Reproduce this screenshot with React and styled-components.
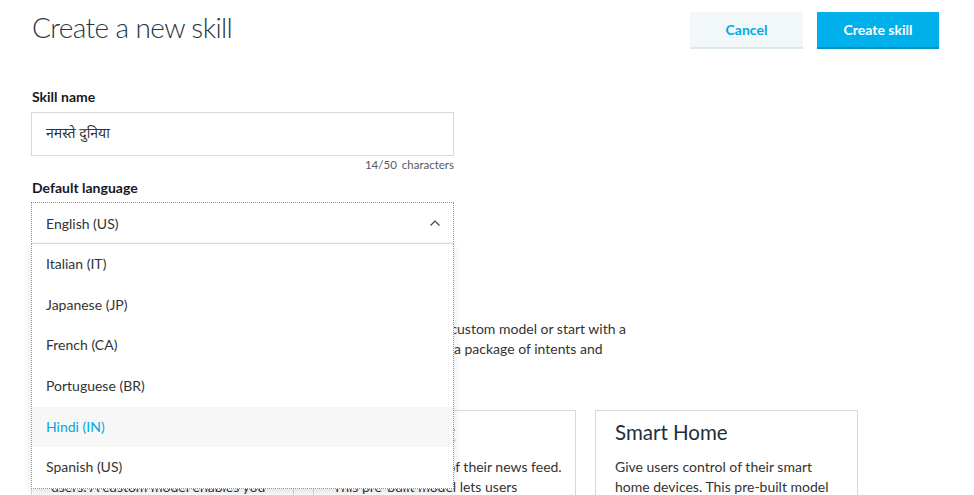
import React from "react";
import styled, { createGlobalStyle } from "styled-components";

const GlobalStyle = createGlobalStyle`
  html, body {
    margin: 0;
    padding: 0;
    background: #ffffff;
  }
  body {
    font-family: Lato, "Open Sans", "Noto Sans", sans-serif;
    color: #232f3e;
    overflow: hidden;
  }
`;

const Page = styled.div`
  width: 974px;
  height: 495px;
  box-sizing: border-box;
  padding: 12px 35px 0 31px;
  overflow: hidden;
`;

const Header = styled.div`
  display: flex;
  justify-content: space-between;
  align-items: flex-start;
`;

const Title = styled.h1`
  margin: -1px 0 0;
  padding-left: 1px;
  font-size: 28px;
  font-weight: 300;
  line-height: 33px;
  color: #2b3440;
  letter-spacing: -0.6px;
`;

const Actions = styled.div`
  display: flex;
  gap: 14px;
`;

const Button = styled.button`
  height: 37px;
  padding: 0;
  width: ${({ wide }) => (wide ? "122px" : "113px")};
  border: none;
  border-bottom: 2px solid ${({ primary }) => (primary ? "#0094c6" : "#dde9ed")};
  background: ${({ primary }) => (primary ? "#00b0ea" : "#f2f8fa")};
  color: ${({ primary }) => (primary ? "#ffffff" : "#00a8e1")};
  font-family: Lato, sans-serif;
  font-size: 14px;
  font-weight: 700;
  cursor: pointer;
`;

const Form = styled.div`
  width: 423px;
  margin-top: 38px;
`;

const Label = styled.div`
  font-size: 14px;
  font-weight: 700;
  line-height: 20px;
  color: #16191f;
  margin-top: ${({ top }) => top || 0}px;
  padding-left: 1px;
`;

const Input = styled.div`
  margin-top: 5px;
  height: 44px;
  box-sizing: border-box;
  border: 1px solid #d5dbdb;
  padding: 0 14px;
  display: flex;
  align-items: center;
  font-family: "Noto Sans Devanagari", "Noto Sans", Lato, sans-serif;
  font-size: 14px;
  color: #333;
`;

const Counter = styled.div`
  margin-top: 1px;
  text-align: right;
  font-size: 11.5px;
  line-height: 16px;
  color: #545b64;
  word-spacing: 2px;
`;

const Combo = styled.div`
  position: relative;
  margin-top: 4px;
  z-index: 5;
`;

const Select = styled.div`
  height: 42px;
  box-sizing: border-box;
  border: 1px dotted #8d9499;
  border-bottom: 1px solid #d5dbdb;
  padding: 0 12px 0 14px;
  display: flex;
  align-items: center;
  justify-content: space-between;
  font-size: 14px;
  color: #333;
  background: #fff;
`;

const Menu = styled.ul`
  position: absolute;
  top: 100%;
  left: 0;
  right: 0;
  margin: 0;
  padding: 0;
  list-style: none;
  background: #fff;
  border: 1px dotted #8d9499;
  border-top: none;
  box-shadow: 0 3px 8px rgba(0, 0, 0, 0.12);
`;

const Option = styled.li`
  height: 40.7px;
  box-sizing: border-box;
  padding: 0 14px 2px;
  display: flex;
  align-items: center;
  font-size: 14px;
  color: ${({ active }) => (active ? "#00a8e1" : "#333")};
  background: ${({ active }) => (active ? "#f7f7f7" : "transparent")};
`;

const Models = styled.div`
  margin-top: 32px;
`;

const Heading = styled.h2`
  margin: 0;
  font-size: 20px;
  font-weight: 400;
  line-height: 26px;
  color: #232f3e;
`;

const Paragraph = styled.p`
  margin: 17px 0 0;
  width: 720px;
  font-size: 14px;
  line-height: 20px;
  color: #333;
`;

const Cards = styled.div`
  display: grid;
  grid-template-columns: repeat(3, 263px);
  gap: 19px;
  margin-top: 31px;
`;

const Card = styled.div`
  border: 1px solid #d5dbdb;
  padding: 8px 10px 20px 19px;
  height: 140px;
`;

const CardTitle = styled.div`
  font-size: 20.5px;
  line-height: 26px;
  color: #232f3e;
`;

const CardText = styled.div`
  margin-top: 12px;
  font-size: 14px;
  line-height: 20px;
  color: #333;
`;

const Chevron = () => (
  <svg width="12" height="8" viewBox="0 0 12 8">
    <polyline points="1.5,6.5 6,2 10.5,6.5" fill="none" stroke="#444" strokeWidth="1.2" />
  </svg>
);

const languages = [
  "Italian (IT)",
  "Japanese (JP)",
  "French (CA)",
  "Portuguese (BR)",
  "Hindi (IN)",
  "Spanish (US)",
];

const models = [
  {
    title: "Custom",
    text: "Design a unique experience for your users. A custom model enables you to\u00a0create all of your skill's interactions.",
  },
  {
    title: "Flash Briefing",
    text: "Give users control of their news feed. This pre-built model lets users control\u00a0what updates they listen to.",
  },
  {
    title: "Smart Home",
    text: "Give users control of their smart home devices. This pre-built model lets users turn off the lights.",
  },
];

export default function App() {
  return (
    <>
      <GlobalStyle />
      <Page>
        <Header>
          <Title>Create a new skill</Title>
          <Actions>
            <Button>Cancel</Button>
            <Button primary wide>
              Create skill
            </Button>
          </Actions>
        </Header>

        <Form>
          <Label>Skill name</Label>
          <Input>नमस्ते दुनिया</Input>
          <Counter>14/50 characters</Counter>
          <Label top={5}>Default language</Label>
          <Combo>
            <Select>
              <span>English (US)</span>
              <Chevron />
            </Select>
            <Menu>
              {languages.map((lang) => (
                <Option key={lang} active={lang === "Hindi (IN)"}>
                  {lang}
                </Option>
              ))}
            </Menu>
          </Combo>
        </Form>

        <Models>
          <Heading>Choose a model to add to your skill</Heading>
          <Paragraph>
            There are many ways to start building a skill. You can build your own custom model or start with a
            <br />
            pre-built model. Pre-built models are interaction models that contain a package of intents and
            <br />
            utterances that you can add to your skill.
          </Paragraph>
          <Cards>
            {models.map((m) => (
              <Card key={m.title}>
                <CardTitle>{m.title}</CardTitle>
                <CardText>{m.text}</CardText>
              </Card>
            ))}
          </Cards>
        </Models>
      </Page>
    </>
  );
}
